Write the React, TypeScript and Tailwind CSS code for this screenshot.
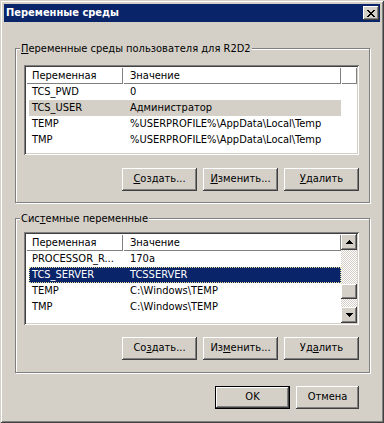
import React from 'react';

const raised =
  'shadow-[inset_-1px_-1px_#404040,inset_1px_1px_#fff,inset_-2px_-2px_#808080,inset_2px_2px_#d4d0c8]';

type Row = { name: string; value: string; hl?: 'gray' | 'blue' };

function Btn({ children, className = '' }: { children: React.ReactNode; className?: string }) {
  return (
    <div className={`h-[23px] flex items-center justify-center bg-[#d4d0c8] ${raised} ${className}`}>
      {children}
    </div>
  );
}

function Header({ withFiller }: { withFiller: boolean }) {
  return (
    <div className="flex h-[17px]">
      <div className="w-[97px] pl-[6px] leading-[17px] shadow-[inset_1px_1px_#fff,inset_-1px_-1px_#808080]">
        Переменная
      </div>
      <div className="w-[218px] pl-[7px] leading-[17px] shadow-[inset_1px_1px_#fff,inset_-1px_-1px_#808080]">
        Значение
      </div>
      {withFiller && <div className="w-[16px] shadow-[inset_1px_1px_#fff,inset_-1px_-1px_#808080]" />}
    </div>
  );
}

function Rows({ rows }: { rows: Row[] }) {
  return (
    <div className="bg-white flex-1">
      {rows.map((r) => (
        <div key={r.name} className="h-[16px] flex">
          <div
            className={`ml-[3px] w-[312px] flex leading-[16px] whitespace-nowrap ${
              r.hl === 'gray' ? 'bg-[#d4d0c8]' : ''
            } ${
              r.hl === 'blue'
                ? 'bg-[#0a246a] text-white outline-1 outline-dotted outline-[#e0d890] -outline-offset-1'
                : ''
            }`}
          >
            <div className="w-[94px] pl-[3px] overflow-hidden">{r.name}</div>
            <div className="w-[218px] pl-[7px] overflow-hidden">{r.value}</div>
          </div>
        </div>
      ))}
    </div>
  );
}

function Arrow({ up }: { up: boolean }) {
  return (
    <svg width="7" height="4" viewBox="0 0 7 4" shapeRendering="crispEdges">
      {up ? (
        <>
          <rect x="3" y="0" width="1" height="1" />
          <rect x="2" y="1" width="3" height="1" />
          <rect x="1" y="2" width="5" height="1" />
          <rect x="0" y="3" width="7" height="1" />
        </>
      ) : (
        <>
          <rect x="0" y="0" width="7" height="1" />
          <rect x="1" y="1" width="5" height="1" />
          <rect x="2" y="2" width="3" height="1" />
          <rect x="3" y="3" width="1" height="1" />
        </>
      )}
    </svg>
  );
}

function ScrollBar() {
  return (
    <div className="w-[16px] flex flex-col">
      <div className={`h-[16px] flex items-center justify-center bg-[#d4d0c8] ${raised}`}>
        <Arrow up />
      </div>
      <div className="flex-1 flex flex-col bg-[repeating-conic-gradient(#d4d0c8_0_25%,#fff_0_50%)] bg-[length:2px_2px]">
        <div className="h-[34px]" />
        <div className={`h-[15px] bg-[#d4d0c8] ${raised}`} />
      </div>
      <div className={`h-[16px] flex items-center justify-center bg-[#d4d0c8] ${raised}`}>
        <Arrow up={false} />
      </div>
    </div>
  );
}

const sunken =
  'p-[2px] bg-white shadow-[inset_1px_1px_#808080,inset_-1px_-1px_#fff,inset_2px_2px_#404040,inset_-2px_-2px_#d4d0c8]';

const userRows: Row[] = [
  { name: 'TCS_PWD', value: '0' },
  { name: 'TCS_USER', value: 'Администратор', hl: 'gray' },
  { name: 'TEMP', value: '%USERPROFILE%\\AppData\\Local\\Temp' },
  { name: 'TMP', value: '%USERPROFILE%\\AppData\\Local\\Temp' },
];

const sysRows: Row[] = [
  { name: 'PROCESSOR_R...', value: '170a' },
  { name: 'TCS_SERVER', value: 'TCSSERVER', hl: 'blue' },
  { name: 'TEMP', value: 'C:\\Windows\\TEMP' },
  { name: 'TMP', value: 'C:\\Windows\\TEMP' },
];

function ButtonsRow({ sys }: { sys: boolean }) {
  return (
    <div className="flex justify-end gap-[6px] w-[335px]">
      <Btn className="w-[75px]">
        {sys ? (
          <span>
            Со<u>з</u>дать...
          </span>
        ) : (
          <span>
            <u>С</u>оздать...
          </span>
        )}
      </Btn>
      <Btn className="w-[75px]">
        {sys ? (
          <span>
            Из<u>м</u>енить...
          </span>
        ) : (
          <span>
            <u>И</u>зменить...
          </span>
        )}
      </Btn>
      <Btn className="w-[75px]">
        {sys ? (
          <span>
            Уд<u>а</u>лить
          </span>
        ) : (
          <span>
            <u>У</u>далить
          </span>
        )}
      </Btn>
    </div>
  );
}

export default function App() {
  return (
    <div className="w-[384px] h-[423px] bg-[#d4d0c8] p-[4px] flex flex-col text-black text-[11px] font-['DejaVu_Sans_Condensed','DejaVu_Sans',sans-serif] shadow-[inset_1px_1px_#d4d0c8,inset_-1px_-1px_#404040,inset_2px_2px_#fff,inset_-2px_-2px_#808080]">
      {/* title bar */}
      <div className="h-[18px] bg-[#0a246a] flex items-center justify-between pl-[2px] pr-[1px]">
        <span className="text-white font-bold leading-[18px]">Переменные среды</span>
        <div className={`w-[16px] h-[14px] flex items-center justify-center bg-[#d4d0c8] ${raised}`}>
          <svg width="8" height="7" viewBox="0 0 8 7" shapeRendering="crispEdges">
            <path d="M0 0h2v1H0zM6 0h2v1H6zM1 1h2v1H1zM5 1h2v1H5zM2 2h4v1H2zM3 3h2v1H3zM2 4h4v1H2zM1 5h2v1H1zM5 5h2v1H5zM0 6h2v1H0zM6 6h2v1H6z" />
          </svg>
        </div>
      </div>

      <div className="pl-[11px] pt-[26px] flex flex-col">
        {/* user variables */}
        <div className="relative w-[355px] h-[155px] border border-[#808080] shadow-[inset_1px_1px_#fff,1px_1px_#fff] pl-[8px] pt-[16px]">
          <div className="absolute left-[4px] -top-[7px] px-[1px] bg-[#d4d0c8] leading-[13px] whitespace-nowrap">
            <u>П</u>еременные среды пользователя для R2D2
          </div>
          <div className={`w-[335px] h-[90px] flex flex-col ${sunken}`}>
            <Header withFiller />
            <Rows rows={userRows} />
          </div>
          <div className="mt-[13px]">
            <ButtonsRow sys={false} />
          </div>
        </div>

        {/* system variables */}
        <div className="relative mt-[15px] w-[355px] h-[155px] border border-[#808080] shadow-[inset_1px_1px_#fff,1px_1px_#fff] pl-[8px] pt-[13px]">
          <div className="absolute left-[4px] -top-[7px] px-[1px] bg-[#d4d0c8] leading-[13px] whitespace-nowrap">
            Сис<u>т</u>емные переменные
          </div>
          <div className={`w-[335px] h-[93px] flex ${sunken}`}>
            <div className="w-[315px] flex flex-col overflow-hidden">
              <Header withFiller={false} />
              <Rows rows={sysRows} />
            </div>
            <ScrollBar />
          </div>
          <div className="mt-[12px]">
            <ButtonsRow sys />
          </div>
        </div>

        {/* dialog buttons */}
        <div className="mt-[13px] w-[344px] flex justify-end gap-[6px]">
          <div className="w-[75px] h-[23px] border border-black">
            <div className={`w-full h-full flex items-center justify-center bg-[#d4d0c8] ${raised}`}>OK</div>
          </div>
          <Btn className="w-[63px]">Отмена</Btn>
        </div>
      </div>
    </div>
  );
}
